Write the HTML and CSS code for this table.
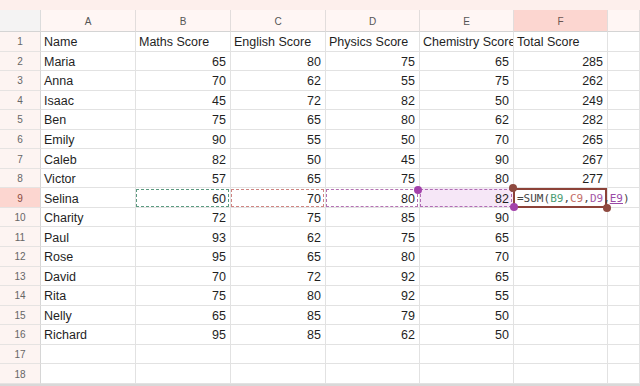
FILE: index.html
```html
<!DOCTYPE html>
<html>
<head>
<meta charset="utf-8">
<link rel="stylesheet" href="styles.css">
</head>
<body>
<div class="topbar"></div>
<div class="sheet">
  <div class="row head">
    <div class="corner"></div><div class="ch">A</div><div class="ch">B</div><div class="ch">C</div><div class="ch">D</div><div class="ch">E</div><div class="ch active">F</div><div class="ch"></div>
  </div>
  <div class="row"><div class="rn">1</div><div class="c">Name</div><div class="c">Maths Score</div><div class="c">English Score</div><div class="c">Physics Score</div><div class="c">Chemistry Score</div><div class="c">Total Score</div><div class="c"></div></div>
  <div class="row"><div class="rn">2</div><div class="c">Maria</div><div class="c n">65</div><div class="c n">80</div><div class="c n">75</div><div class="c n">65</div><div class="c n">285</div><div class="c"></div></div>
  <div class="row"><div class="rn">3</div><div class="c">Anna</div><div class="c n">70</div><div class="c n">62</div><div class="c n">55</div><div class="c n">75</div><div class="c n">262</div><div class="c"></div></div>
  <div class="row"><div class="rn">4</div><div class="c">Isaac</div><div class="c n">45</div><div class="c n">72</div><div class="c n">82</div><div class="c n">50</div><div class="c n">249</div><div class="c"></div></div>
  <div class="row"><div class="rn">5</div><div class="c">Ben</div><div class="c n">75</div><div class="c n">65</div><div class="c n">80</div><div class="c n">62</div><div class="c n">282</div><div class="c"></div></div>
  <div class="row"><div class="rn">6</div><div class="c">Emily</div><div class="c n">90</div><div class="c n">55</div><div class="c n">50</div><div class="c n">70</div><div class="c n">265</div><div class="c"></div></div>
  <div class="row"><div class="rn">7</div><div class="c">Caleb</div><div class="c n">82</div><div class="c n">50</div><div class="c n">45</div><div class="c n">90</div><div class="c n">267</div><div class="c"></div></div>
  <div class="row"><div class="rn">8</div><div class="c">Victor</div><div class="c n">57</div><div class="c n">65</div><div class="c n">75</div><div class="c n">80</div><div class="c n">277</div><div class="c"></div></div>
  <div class="row"><div class="rn active">9</div><div class="c">Selina</div>
    <div class="c n rng"><span class="box box-b"></span>60</div>
    <div class="c n rng"><span class="box box-c"></span>70</div>
    <div class="c n rng"><span class="box box-d"></span>80</div>
    <div class="c n rng fill-e"><span class="box box-e"></span>82<span class="dot dot-e1"></span><span class="dot dot-e2"></span></div>
    <div class="c formula-cell"><span class="box box-f"></span><span class="formula"><span class="op">=SUM(</span><span class="rb">B9</span><span class="op">,</span><span class="rc">C9</span><span class="op">,</span><span class="rd">D9</span><span class="op">,</span><span class="re">E9</span><span class="op">)</span></span><span class="dot dot-f1"></span><span class="dot dot-f2"></span></div>
    <div class="c"></div></div>
  <div class="row"><div class="rn">10</div><div class="c">Charity</div><div class="c n">72</div><div class="c n">75</div><div class="c n">85</div><div class="c n">90</div><div class="c"></div><div class="c"></div></div>
  <div class="row"><div class="rn">11</div><div class="c">Paul</div><div class="c n">93</div><div class="c n">62</div><div class="c n">75</div><div class="c n">65</div><div class="c"></div><div class="c"></div></div>
  <div class="row"><div class="rn">12</div><div class="c">Rose</div><div class="c n">95</div><div class="c n">65</div><div class="c n">80</div><div class="c n">70</div><div class="c"></div><div class="c"></div></div>
  <div class="row"><div class="rn">13</div><div class="c">David</div><div class="c n">70</div><div class="c n">72</div><div class="c n">92</div><div class="c n">65</div><div class="c"></div><div class="c"></div></div>
  <div class="row"><div class="rn">14</div><div class="c">Rita</div><div class="c n">75</div><div class="c n">80</div><div class="c n">92</div><div class="c n">55</div><div class="c"></div><div class="c"></div></div>
  <div class="row"><div class="rn">15</div><div class="c">Nelly</div><div class="c n">65</div><div class="c n">85</div><div class="c n">79</div><div class="c n">50</div><div class="c"></div><div class="c"></div></div>
  <div class="row"><div class="rn">16</div><div class="c">Richard</div><div class="c n">95</div><div class="c n">85</div><div class="c n">62</div><div class="c n">50</div><div class="c"></div><div class="c"></div></div>
  <div class="row"><div class="rn">17</div><div class="c"></div><div class="c"></div><div class="c"></div><div class="c"></div><div class="c"></div><div class="c"></div><div class="c"></div></div>
  <div class="row"><div class="rn">18</div><div class="c"></div><div class="c"></div><div class="c"></div><div class="c"></div><div class="c"></div><div class="c"></div><div class="c"></div></div>
</div>
<div class="bottomline"></div>
</body>
</html>
```

FILE: styles.css
```css
* { box-sizing: border-box; }
html, body { margin: 0; padding: 0; background: #ffffff; }
body {
  width: 640px;
  height: 386px;
  overflow: hidden;
  font-family: "Liberation Sans", Arial, sans-serif;
  color: #1f1f1f;
}
.topbar {
  height: 10px;
  background: #fdefec;
}
.sheet {
  display: flex;
  flex-direction: column;
}
.row {
  display: grid;
  grid-template-columns: 41px 95px 95px 95px 94px 94px 94px 1fr;
  height: 19.55px;
}
.row.head {
  height: 22px;
}
.corner {
  background: #f4f3f3;
  border-right: 1px solid #dcdcdc;
  border-bottom: 1px solid #d4d4d4;
}
.ch {
  background: #fff6f4;
  border-right: 1px solid #e2dddc;
  border-bottom: 1px solid #d4d4d4;
  font-size: 10px;
  color: #555555;
  display: flex;
  align-items: center;
  justify-content: center;
  padding-top: 1px;
}
.ch.active {
  background: #fcd6d0;
  color: #6a5550;
}
.rn {
  background: #fdf4f2;
  border-right: 1px solid #d6d6d6;
  border-bottom: 1px solid #e6e3e2;
  font-size: 10px;
  color: #666666;
  display: flex;
  align-items: center;
  justify-content: center;
  padding-top: 1px;
}
.rn.active {
  background: #fcd6d0;
  color: #8a4a42;
}
.c {
  position: relative;
  border-right: 1px solid #e2e2e2;
  border-bottom: 1px solid #e2e2e2;
  font-size: 12.5px;
  padding: 2px 3px 0 3px;
  display: flex;
  align-items: center;
  white-space: nowrap;
  overflow: hidden;
}
.c.n {
  justify-content: flex-end;
  padding-right: 4px;
}
.rng, .formula-cell {
  overflow: visible;
}
.fill-e {
  background: #f6e7f7;
}
.box {
  position: absolute;
  pointer-events: none;
}
.box-b {
  left: 0; top: 1px; right: 1px; bottom: 0;
  border: 1px dashed #5c9a80;
}
.box-c {
  left: 0; top: 1px; right: 1px; bottom: 0;
  border: 1px dashed #cf8582;
}
.box-d {
  left: 0; top: 1px; right: 1px; bottom: 0;
  border: 1px dashed #b471b2;
}
.box-e {
  left: 0; top: 1px; right: 1px; bottom: 0;
  border: 1px dashed #b06cb4;
}
.box-f {
  left: -1px; top: 0; right: 0; bottom: -1px;
  border: 2px solid #8c4238;
  z-index: 2;
}
.formula-cell {
  padding-left: 3px;
  z-index: 3;
}
.formula {
  font-family: "DejaVu Sans Mono", "Liberation Mono", monospace;
  font-size: 11px;
  color: #444444;
  position: relative;
  z-index: 3;
}
.rb { color: #4d9c73; }
.rc { color: #c46f69; }
.rd { color: #a458a6; }
.re { color: #9a4aa6; text-decoration: underline; text-decoration-color: #9a4aa6; }
.dot {
  position: absolute;
  width: 8px;
  height: 8px;
  border-radius: 50%;
  z-index: 5;
}
.dot-e1 { background: #a342ab; left: -6px; top: -2px; }
.dot-e2 { background: #a342ab; right: -5px; bottom: -4px; }
.dot-f1 { background: #8e4a40; left: -5px; top: -4px; }
.dot-f2 { background: #8e4a40; right: -4px; bottom: -5px; }
.bottomline {
  height: 3px;
  background: #d9d9d9;
}
```
